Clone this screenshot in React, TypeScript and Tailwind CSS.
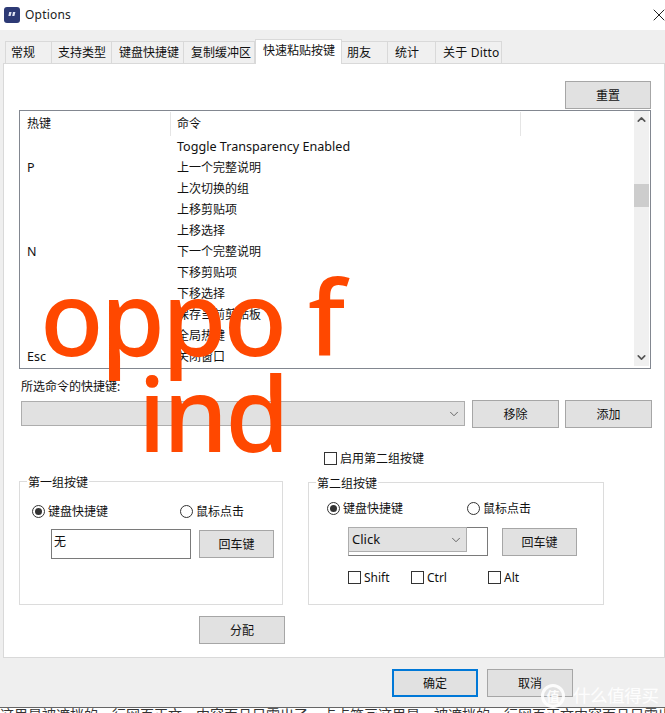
import { ChevronDown, ChevronUp, X } from 'lucide-react'

const FONT = 'font-["Noto_Sans","Noto_Sans_CJK_SC",sans-serif]'
const BTN = 'flex items-center justify-center border border-[#a6a6a6] bg-[#e1e1e1] pt-[2px] text-[12px] text-[#111]'

const tabs = [
    { label: '常规', w: 'w-[47px] pl-[5px]' },
    { label: '支持类型', w: 'w-[60px] pl-[6px]' },
    { label: '键盘快捷键', w: 'w-[72px] pl-[7px]' },
    { label: '复制缓冲区', w: 'w-[71px] pl-[7px]' },
    { label: '快速粘贴按键', w: 'w-[87px] pl-[7px]', active: true },
    { label: '朋友', w: 'w-[46px] pl-[5px]' },
    { label: '统计', w: 'w-[48px] pl-[7px]' },
    { label: '关于 Ditto', w: 'w-[66px] pl-[7px] tracking-[0.2px]' },
]

const rows = [
    ['', 'Toggle Transparency Enabled', 'text-[12.6px]'],
    ['P', '上一个完整说明', 'pb-[2px] text-[12px]'],
    ['', '上次切换的组', 'pb-[2px] text-[12px]'],
    ['', '上移剪贴项', 'pb-[2px] text-[12px]'],
    ['', '上移选择', 'pb-[2px] text-[12px]'],
    ['N', '下一个完整说明', 'pb-[2px] text-[12px]'],
    ['', '下移剪贴项', 'pb-[2px] text-[12px]'],
    ['', '下移选择', 'pb-[2px] text-[12px]'],
    ['', '保存当前剪贴板', 'pb-[2px] text-[12px]'],
    ['', '全局热键', 'pb-[2px] text-[12px]'],
    ['Esc', '关闭窗口', 'pb-[2px] text-[12px]'],
]

function Radio({ checked, label, className }: { checked?: boolean; label: string; className?: string }) {
    return (
        <div className={`flex items-center ${className ?? ''}`}>
            <span className="flex h-[13px] w-[13px] items-center justify-center rounded-full border border-[#333]">
                {checked && <span className="h-[7px] w-[7px] rounded-full bg-[#333]" />}
            </span>
            <span className="ml-[3px] pt-px text-[12px] leading-none">{label}</span>
        </div>
    )
}

function Check({ label, className }: { label: string; className?: string }) {
    return (
        <div className={`flex items-center ${className ?? ''}`}>
            <span className="h-[13px] w-[13px] border border-[#333]" />
            <span className="ml-[3px] pt-px text-[12px] leading-none">{label}</span>
        </div>
    )
}

function Group({ title, className, children }: { title: string; className: string; children: React.ReactNode }) {
    return (
        <div className={`relative border border-[#dcdcdc] ${className}`}>
            <span className="absolute left-[7px] top-[-7px] bg-white px-px text-[12px] leading-[16px]">{title}</span>
            {children}
        </div>
    )
}

export default function App() {
    return (
        <div className={`relative h-[713px] w-[665px] overflow-hidden bg-[#efefef] text-[#111] ${FONT}`}>
            {/* title bar */}
            <div className="flex h-[30px] items-center bg-white">
                <div className="ml-[4px] flex h-[16px] w-[16px] items-center justify-center rounded-[3px] bg-[#2d3a75]">
                    <svg viewBox="0 0 16 16" className="h-[16px] w-[16px]">
                        <path d="M5.2 5h2.4l-1 4H4.4zM9 5h2.4l-1 4H8.2z" fill="#dfe3f2" />
                    </svg>
                </div>
                <span className="ml-[5px] text-[12px] tracking-[0.2px] text-[#222]">Options</span>
                <X className="ml-auto mr-[-4px] h-[20px] w-[20px] text-[#222]" strokeWidth={1.2} />
            </div>

            {/* tabs */}
            <div className="ml-[5px] mt-[9px] flex h-[24px] items-end">
                {tabs.map((t) => (
                    <div
                        key={t.label}
                        className={`flex shrink-0 items-center justify-start whitespace-nowrap border border-b-0 border-[#d9d9d9] text-[12px] ${t.w} ${
                            t.active ? 'relative z-10 mb-[-1px] h-[25px] bg-white pb-[3px]' : 'h-[22px] border-l-0 bg-[#f0f0f0] first:border-l'
                        }`}
                    >
                        {t.label}
                    </div>
                ))}
            </div>

            {/* panel */}
            <div className="ml-[3px] h-[595px] w-[662px] border border-[#d9d9d9] bg-white">
                <div className={`ml-[561px] mt-[17px] h-[28px] w-[86px] ${BTN}`}>重置</div>

                <div className="ml-[15px] mt-px h-[259px] w-[632px] border border-[#828790]">
                    <div className="flex h-[257px]">
                        <div className="w-[613px]">
                            <div className="mb-px mt-px flex h-[24px] items-center text-[12px]">
                                <span className="w-[150px] pl-[7px]">热键</span>
                                <span className="h-full w-px bg-[#e5e5e5]" />
                                <span className="w-[349px] pl-[6px]">命令</span>
                                <span className="h-full w-px bg-[#e5e5e5]" />
                            </div>
                            {rows.map(([key, cmd, size]) => (
                                <div key={cmd} className={`flex h-[21px] items-center leading-none ${size}`}>
                                    <span className="w-[151px] pl-[7px] pt-[2px] text-[12.5px]">{key}</span>
                                    <span className="pl-[6px]">{cmd}</span>
                                </div>
                            ))}
                        </div>
                        <div className="ml-[1px] flex h-[255px] w-[15px] flex-col bg-[#f0f0f0]">
                            <ChevronUp className="mt-[2px] h-[13px] w-[15px] text-[#555]" strokeWidth={3} />
                            <div className="mt-[58px] h-[23px] bg-[#cdcdcd]" />
                            <ChevronDown className="mb-[2px] mt-auto h-[13px] w-[15px] text-[#555]" strokeWidth={3} />
                        </div>
                    </div>
                </div>

                <div className="ml-[17px] mt-[10px] h-[16px] text-[12px] leading-[16px]">所选命令的快捷键:</div>

                <div className="ml-[17px] mt-[5px] flex items-start">
                    <div className="mt-px flex h-[25px] w-[444px] items-center justify-end border border-[#adadad] bg-[#e1e1e1] pr-[3px]">
                        <ChevronDown className="h-[14px] w-[14px] text-[#555]" strokeWidth={1.5} />
                    </div>
                    <div className={`ml-[7px] h-[28px] w-[87px] ${BTN}`}>移除</div>
                    <div className={`ml-[6px] h-[28px] w-[87px] ${BTN}`}>添加</div>
                </div>

                <Check label="启用第二组按键" className="ml-[320px] mt-[24px]" />

                <div className="ml-[15px] mt-[15px] flex items-start">
                    <Group title="第一组按键" className="mt-px h-[124px] w-[264px]">
                        <div className="ml-[12px] mt-[23px] flex">
                            <Radio checked label="键盘快捷键" className="w-[148px]" />
                            <Radio label="鼠标点击" />
                        </div>
                        <div className="ml-[31px] mt-[11px] flex items-start">
                            <div className="h-[30px] w-[140px] border border-[#7a7a7a] px-[2px] text-[12px] leading-[24px]">无</div>
                            <div className={`ml-[8px] mt-px h-[28px] w-[75px] ${BTN}`}>回车键</div>
                        </div>
                    </Group>
                    <Group title="第二组按键" className="ml-[25px] mt-[2px] h-[123px] w-[296px]">
                        <div className="ml-[18px] mt-[19px] flex">
                            <Radio checked label="键盘快捷键" className="w-[140px]" />
                            <Radio label="鼠标点击" />
                        </div>
                        <div className="ml-[39px] mt-[12px] flex items-start">
                            <div className="h-[29px] w-[140px] border border-[#7a7a7a] border-l-[#adadad]">
                                <div className="ml-[-1px] mt-[-1px] flex h-[25px] w-[119px] items-center justify-between border border-[#adadad] bg-[#e1e1e1] px-[3px] text-[13px]">
                                    Click
                                    <ChevronDown className="h-[14px] w-[14px] text-[#555]" strokeWidth={1.5} />
                                </div>
                            </div>
                            <div className={`ml-[14px] mt-px h-[28px] w-[75px] ${BTN}`}>回车键</div>
                        </div>
                        <div className="ml-[39px] mt-[15px] flex">
                            <Check label="Shift" className="w-[63px]" />
                            <Check label="Ctrl" className="w-[77px]" />
                            <Check label="Alt" />
                        </div>
                    </Group>
                </div>

                <div className={`ml-[195px] mt-[11px] h-[28px] w-[86px] ${BTN}`}>分配</div>
            </div>

            {/* footer buttons */}
            <div className="ml-[392px] mt-[11px] flex">
                <div className="flex h-[28px] w-[86px] items-center justify-center border-2 border-[#0078d7] bg-[#e1e1e1] pt-[2px] text-[12px]">确定</div>
                <div className={`ml-[9px] h-[28px] w-[86px] ${BTN}`}>取消</div>
            </div>

            {/* page behind the window */}
            <div className="absolute bottom-0 left-0 h-[6px] w-full overflow-hidden border-t border-[#666] bg-white">
                <div className="mt-[-4px] whitespace-nowrap text-[14px] text-[#333]">
                    这里是被遮挡的一行网页正文　内容而且只露出了一点点笔画这里是　被遮挡的一行网页正文内容而且只露出了一点点
                </div>
            </div>

            {/* watermark */}
            <div className="absolute left-[541px] top-[684px] flex items-center text-white/90">
                <span className="flex h-[24px] w-[24px] items-center justify-center rounded-full border-[3px] border-white/90 text-[13px] font-bold leading-none">值</span>
                <span className="ml-[8px] text-[17.5px] leading-none tracking-[-0.4px]">什么值得买</span>
            </div>

            {/* overlay sticker text */}
            <div className="absolute left-[40px] top-[268px] text-[104px] font-medium leading-[96px] tracking-[-3px] text-[#ff4800]">
                <div>oppo f</div>
                <div className="ml-[98px]">ind</div>
            </div>
        </div>
    )
}
